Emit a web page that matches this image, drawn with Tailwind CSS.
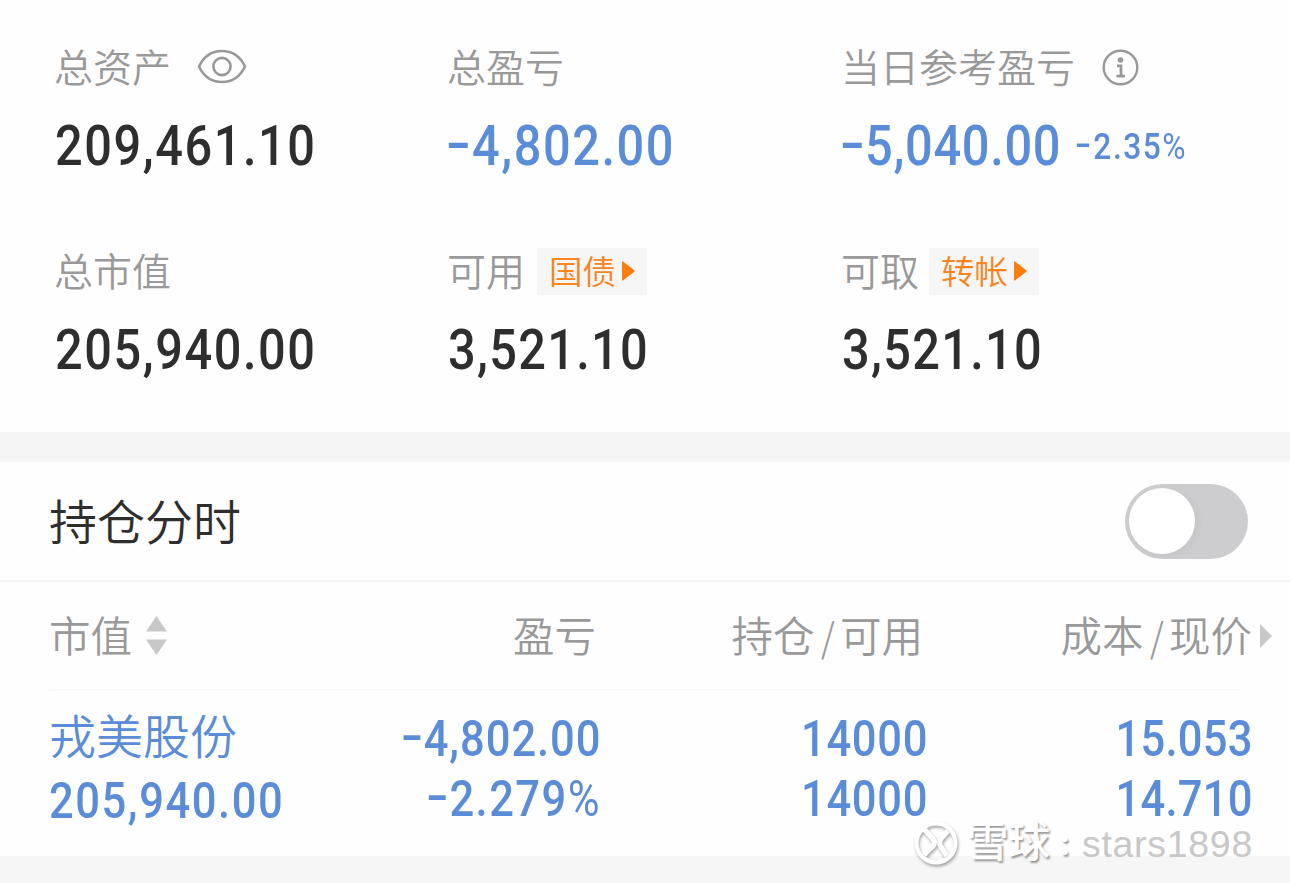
<!DOCTYPE html>
<html lang="zh-CN">
<head>
    <meta charset="UTF-8">
    <meta name="viewport" content="width=device-width, initial-scale=1.0">
    <title>持仓</title>
    <script src="https://cdn.jsdelivr.net/npm/@tailwindcss/browser@4"></script>
</head>
<body class="bg-[#f6f6f6] font-['Roboto','Noto_Sans_CJK_SC',sans-serif] font-[350] text-[#999]">
    <div class="relative w-[1290px] h-[883px] overflow-hidden">
        <!-- Account summary -->
        <section class="h-[432px] bg-[#fefefe] pt-[43px] pl-[55px] grid grid-cols-[393px_394px_1fr] content-start gap-y-[73px] text-[39px] leading-none">
            <div>
                <div class="h-12 flex items-center">
                    <span class="pt-[5px] -ml-px">总资产</span>
                    <svg class="ml-[26px] w-[50px] h-[38px]" viewBox="0 0 50 38" fill="none" stroke="#999" stroke-width="2.6">
                        <path d="M2 18.5C7 8 15 3 25 3S43 8 48 18.5C43 29 35 34 25 34S7 29 2 18.5Z"/>
                        <circle cx="25" cy="18.5" r="8.6"/>
                    </svg>
                </div>
                <div class="mt-[27px] h-14 flex items-center font-medium text-[#2e2e2e] text-[56px]">
                    <span class="origin-left scale-x-[0.87] tracking-[1.8px]">209,461.10</span>
                </div>
            </div>
            <div>
                <div class="h-12 flex items-center"><span class="pt-[5px] -ml-px">总盈亏</span></div>
                <div class="mt-[27px] h-14 flex items-center font-medium text-[#5a8cd8] text-[56px]">
                    <span class="-ml-[2px] origin-left scale-x-[0.87] tracking-[1.8px]"><span class="inline-block origin-left scale-x-150 -translate-y-[3px] mr-[9px]">-</span>4,802.00</span>
                </div>
            </div>
            <div>
                <div class="h-12 flex items-center">
                    <span class="pt-[5px] -ml-px">当日参考盈亏</span>
                    <svg class="ml-[27px] w-[37px] h-[37px]" viewBox="0 0 37 37" fill="none" stroke="#999" stroke-width="2.4">
                        <circle cx="18.5" cy="18.5" r="16.8"/>
                        <circle cx="18.5" cy="11" r="2.8" fill="#999" stroke="none"/>
                        <path d="M15 16.8H19V27M14.500 27.2H23" stroke-width="2.8"/>
                    </svg>
                </div>
                <div class="mt-[27px] h-14 flex items-center font-medium text-[#5a8cd8] text-[56px]">
                    <span class="-ml-[2px] w-[235px] whitespace-nowrap origin-left scale-x-[0.87] tracking-[0.8px]"><span class="inline-block origin-left scale-x-150 -translate-y-[3px] mr-[9px]">-</span>5,040.00</span>
                    <span class="pt-[2px] text-[36.500px] origin-left scale-x-[0.87] tracking-[1.7px]"><span class="inline-block origin-left scale-x-150 -translate-y-[2px] mr-[7px]">-</span>2.35<span class="font-normal">%</span></span>
                </div>
            </div>
            <div>
                <div class="h-12 flex items-center"><span class="pt-[5px] -ml-px">总市值</span></div>
                <div class="mt-[27px] h-14 flex items-center font-medium text-[#2e2e2e] text-[56px]">
                    <span class="origin-left scale-x-[0.87] tracking-[1.8px]">205,940.00</span>
                </div>
            </div>
            <div>
                <div class="h-12 flex items-center">
                    <span class="pt-[4px] -ml-px">可用</span>
                    <span class="ml-3 w-[110px] h-[47px] pl-3 flex items-center bg-[#f6f6f6] text-[#f98420] text-[33.5px]">
                        <span class="pt-[3px]">国债</span>
                        <svg class="ml-[6px] w-[13px] h-[20px]" viewBox="0 0 13 20" fill="#fc7d0c"><path d="M0 1Q0 0 1 .6L12 9Q13 10 12 11L1 19.4Q0 20 0 19Z"/></svg>
                    </span>
                </div>
                <div class="mt-[27px] h-14 flex items-center font-medium text-[#2e2e2e] text-[56px]">
                    <span class="origin-left scale-x-[0.87] tracking-[1.5px]">3,521.10</span>
                </div>
            </div>
            <div>
                <div class="h-12 flex items-center">
                    <span class="pt-[4px] -ml-px">可取</span>
                    <span class="ml-[10px] w-[110px] h-[47px] pl-3 flex items-center bg-[#f6f6f6] text-[#f98420] text-[33.5px]">
                        <span class="pt-[3px]">转帐</span>
                        <svg class="ml-[6px] w-[13px] h-[20px]" viewBox="0 0 13 20" fill="#fc7d0c"><path d="M0 1Q0 0 1 .6L12 9Q13 10 12 11L1 19.4Q0 20 0 19Z"/></svg>
                    </span>
                </div>
                <div class="mt-[27px] h-14 flex items-center font-medium text-[#2e2e2e] text-[56px]">
                    <span class="origin-left scale-x-[0.87] tracking-[1.5px]">3,521.10</span>
                </div>
            </div>
        </section>

        <div class="h-[30px] bg-[#f5f5f5]"></div>

        <!-- Intraday toggle -->
        <section class="h-[120px] pl-[49px] pr-[42px] flex items-center justify-between bg-[#fefefe] border-b-2 border-[#f4f4f4]">
            <h2 class="pt-[5px] text-[48px] leading-none text-[#2e2e2e]">持仓分时</h2>
            <div class="w-[123px] h-[75px] pl-1 flex items-center rounded-full bg-[#cdcdcf]">
                <div class="w-[66px] h-[66px] rounded-full bg-white shadow-[3px_2px_8px_rgba(0,0,0,0.04)]"></div>
            </div>
        </section>

        <!-- Positions -->
        <section class="h-[274px] bg-[#fefefe]">
            <div class="h-[109px] ml-[49px] mr-[50px] flex items-center border-b-2 border-[#f8f8f8] text-[41.5px] leading-none">
                <div class="w-[260px] shrink-0 flex items-center">
                    <span class="pt-[5px]">市值</span>
                    <svg class="ml-[14px] w-[21px] h-[39px]" viewBox="0 0 21 39" fill="#c8c8c8"><path d="M10.5 0 21 15.5H0ZM0 23.500H21L10.500 39Z"/></svg>
                </div>
                <div class="w-[287px] shrink-0 pt-[5px] text-right">盈亏</div>
                <div class="w-[327px] shrink-0 pt-[5px] text-right">持仓<span class="inline-block ml-[6px] mr-[3px] scale-x-90 scale-y-120 translate-y-[2px]">/</span>可用</div>
                <div class="w-[329px] shrink-0 pt-[5px] text-right">成本<span class="inline-block ml-[6px] mr-[3px] scale-x-90 scale-y-120 translate-y-[2px]">/</span>现价</div>
                <svg class="ml-[8px] w-[12px] h-[24px] shrink-0" viewBox="0 0 12 24" fill="#c8c8c8"><path d="M0 0 12 12 0 24Z"/></svg>
            </div>
            <div class="pt-[15px] pl-[49px] flex text-[50px] leading-none font-medium text-[#5a8cd8]">
                <div class="w-[260px]">
                    <div class="h-[62px] flex items-center text-[47px] font-[350]">戎美股份</div>
                    <div class="h-[66px] flex items-center"><span class="origin-left scale-x-[0.87] tracking-[1.8px]">205,940.00</span></div>
                </div>
                <div class="w-[292px]">
                    <div class="h-[66px] flex items-center justify-end"><span class="origin-right scale-x-[0.87] tracking-[1.1px]"><span class="inline-block origin-left scale-x-150 -translate-y-[3px] mr-[8px]">-</span>4,802.00</span></div>
                    <div class="h-[54px] flex items-center justify-end"><span class="origin-right scale-x-[0.87] tracking-[1.7px]"><span class="inline-block origin-left scale-x-150 -translate-y-[3px] mr-[8px]">-</span>2.279<span class="font-normal">%</span></span></div>
                </div>
                <div class="w-[327px]">
                    <div class="h-[66px] flex items-center justify-end"><span class="origin-right scale-x-[0.87] tracking-[0.8px]">14000</span></div>
                    <div class="h-[54px] flex items-center justify-end"><span class="origin-right scale-x-[0.87] tracking-[0.8px]">14000</span></div>
                </div>
                <div class="w-[325px]">
                    <div class="h-[66px] flex items-center justify-end"><span class="origin-right scale-x-[0.87] tracking-[0.3px]">15.053</span></div>
                    <div class="h-[54px] flex items-center justify-end"><span class="origin-right scale-x-[0.87] tracking-[0.3px]">14.710</span></div>
                </div>
            </div>
        </section>

        <!-- Watermark -->
        <div class="absolute left-[913px] top-[820px] h-[46px] flex items-center leading-none">
            <svg class="w-[46px] h-[46px] overflow-visible drop-shadow-[1.5px_2px_1.5px_rgba(0,0,0,0.35)]" viewBox="0 0 46 46" fill="none" stroke="#fff">
                <circle cx="23" cy="23" r="19.500" stroke-width="4"/>
                <path d="M11 9L20 19Q23 22.500 20 26L11 35M35 11L28.500 18Q25 22.500 28 27L34 36" stroke-width="5"/>
            </svg>
            <span class="ml-[8px] w-[85px] text-[41.500px] font-medium text-white [text-shadow:1.5px_2px_2px_rgba(0,0,0,0.4)]">雪球</span>
            <span class="w-[30px] pl-2 text-[34px] font-bold text-white [text-shadow:1.5px_2px_2px_rgba(0,0,0,0.4)]">:</span>
            <span class="pt-[3px] font-['Liberation_Sans',sans-serif] text-[37.500px] tracking-[0.7px] font-normal text-[#c8c8c8] [text-shadow:-1px_-1px_0_#fff]">stars1898</span>
        </div>
    </div>
</body>
</html>
